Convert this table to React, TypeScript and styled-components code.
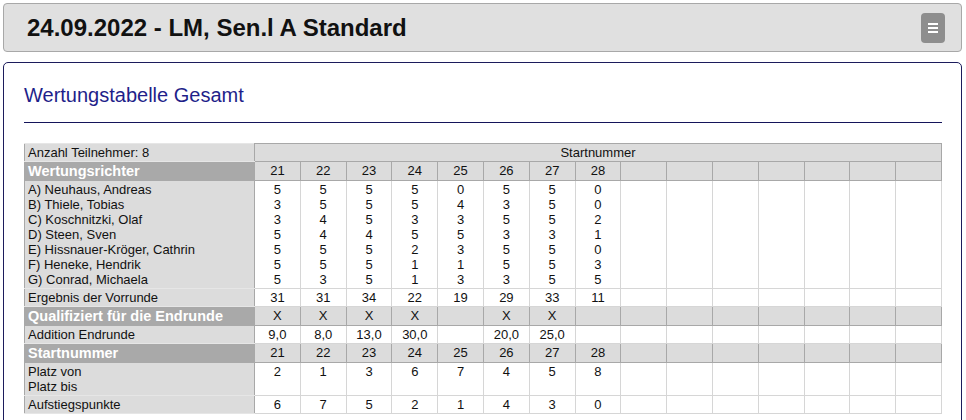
import React from "react";
import styled, { createGlobalStyle } from "styled-components";

const GlobalStyle = createGlobalStyle`
  body {
    margin: 0;
    background: #fff;
    font-family: "Liberation Sans", Arial, sans-serif;
  }
`;

const Page = styled.div`
  padding: 3px 4px 0 3px;
  display: flex;
  flex-direction: column;
  gap: 10px;
`;

const TopBar = styled.div`
  height: 47px;
  background: #e0e0e0;
  border: 1px solid #a8a8a8;
  border-radius: 4px;
  display: flex;
  align-items: center;
  justify-content: space-between;
  padding: 0 16px 0 23px;
`;

const PageTitle = styled.h1`
  margin: 0;
  font-size: 24px;
  font-weight: bold;
  color: #111;
`;

const MenuButton = styled.button`
  width: 24px;
  height: 30px;
  border: none;
  border-radius: 4px;
  background: #8e8e8e;
  display: flex;
  align-items: center;
  justify-content: center;
  padding: 0;
`;

const Panel = styled.div`
  border: 1px solid #1c1c5c;
  border-radius: 5px;
  padding: 21px 19px 20px 20px;
  min-height: 400px;
`;

const PanelTitle = styled.h2`
  margin: 0;
  font-size: 20px;
  font-weight: normal;
  color: #1f1f8a;
  padding-bottom: 15px;
  border-bottom: 1px solid #14145a;
`;

const Table = styled.table`
  margin-top: 20px;
  width: 918px;
  border-collapse: collapse;
  table-layout: fixed;
  font-size: 13px;
  color: #111;
  border: 1px solid #a8a8a8;
`;

const LabelCell = styled.td<{ $head?: boolean }>`
  width: 223px;
  padding: 1px 3px;
  line-height: ${(p) => (p.$head ? "16px" : "15px")};
  text-align: left;
  vertical-align: top;
  background: ${(p) => (p.$head ? "#a9a9a9" : "#dcdcdc")};
  color: ${(p) => (p.$head ? "#fff" : "#111")};
  font-weight: ${(p) => (p.$head ? "bold" : "normal")};
  font-size: ${(p) => (p.$head ? "14.5px" : "13px")};
  border: 1px solid ${(p) => (p.$head ? "#a9a9a9" : "#e6e6e6")};
  border-left-color: #a8a8a8;
  border-right-color: #a8a8a8;
`;

const Cell = styled.td<{ $head?: boolean }>`
  padding: 1px 0;
  line-height: ${(p) => (p.$head ? "16px" : "15px")};
  text-align: center;
  vertical-align: top;
  background: ${(p) => (p.$head ? "#dcdcdc" : "#fff")};
  border: 1px solid ${(p) => (p.$head ? "#a8a8a8" : "#d6d6d6")};
`;

const SpanCell = styled.td`
  padding: 1px 0;
  line-height: 15px;
  text-align: center;
  background: #dcdcdc;
  border: 1px solid #a8a8a8;
`;

const Stack = styled.div`
  display: flex;
  flex-direction: column;
`;

const starts = [21, 22, 23, 24, 25, 26, 27, 28];
const EMPTY = 7;

const judges = [
  { name: "A) Neuhaus, Andreas", v: [5, 5, 5, 5, 0, 5, 5, 0] },
  { name: "B) Thiele, Tobias", v: [3, 5, 5, 5, 4, 3, 5, 0] },
  { name: "C) Koschnitzki, Olaf", v: [3, 4, 5, 3, 3, 5, 5, 2] },
  { name: "D) Steen, Sven", v: [5, 4, 4, 5, 5, 3, 3, 1] },
  { name: "E) Hissnauer-Kröger, Cathrin", v: [5, 5, 5, 2, 3, 5, 5, 0] },
  { name: "F) Heneke, Hendrik", v: [5, 5, 5, 1, 1, 5, 5, 3] },
  { name: "G) Conrad, Michaela", v: [5, 3, 5, 1, 3, 3, 5, 5] },
];

const vorrunde = ["31", "31", "34", "22", "19", "29", "33", "11"];
const quali = ["X", "X", "X", "X", "", "X", "X", ""];
const addition = ["9,0", "8,0", "13,0", "30,0", "", "20,0", "25,0", ""];
const platz = ["2", "1", "3", "6", "7", "4", "5", "8"];
const aufstieg = ["6", "7", "5", "2", "1", "4", "3", "0"];

function Fill({ head }: { head?: boolean }) {
  return (
    <>
      {Array.from({ length: EMPTY }).map((_, i) => (
        <Cell key={i} $head={head} />
      ))}
    </>
  );
}

function ValueRow({ label, values, head }: { label: string; values: string[]; head?: boolean }) {
  return (
    <tr>
      <LabelCell $head={head}>{label}</LabelCell>
      {values.map((v, i) => (
        <Cell key={i} $head={head}>
          {v}
        </Cell>
      ))}
      <Fill head={head} />
    </tr>
  );
}

function MenuIcon() {
  return (
    <svg width="12" height="14" viewBox="0 0 12 14">
      <rect x="1" y="2" width="10" height="2" fill="#fff" />
      <rect x="1" y="6" width="10" height="2" fill="#fff" />
      <rect x="1" y="10" width="10" height="2" fill="#fff" />
    </svg>
  );
}

export default function App() {
  const startStrings = starts.map(String);
  return (
    <Page>
      <GlobalStyle />
      <TopBar>
        <PageTitle>24.09.2022 - LM, Sen.l A Standard</PageTitle>
        <MenuButton aria-label="Menü">
          <MenuIcon />
        </MenuButton>
      </TopBar>
      <Panel>
        <PanelTitle>Wertungstabelle Gesamt</PanelTitle>
        <Table>
          <tbody>
            <tr>
              <LabelCell>Anzahl Teilnehmer: 8</LabelCell>
              <SpanCell colSpan={starts.length + EMPTY}>Startnummer</SpanCell>
            </tr>
            <ValueRow label="Wertungsrichter" values={startStrings} head />
            <tr>
              <LabelCell>
                <Stack>
                  {judges.map((j) => (
                    <span key={j.name}>{j.name}</span>
                  ))}
                </Stack>
              </LabelCell>
              {starts.map((s, c) => (
                <Cell key={s}>
                  <Stack>
                    {judges.map((j) => (
                      <span key={j.name}>{j.v[c]}</span>
                    ))}
                  </Stack>
                </Cell>
              ))}
              <Fill />
            </tr>
            <ValueRow label="Ergebnis der Vorrunde" values={vorrunde} />
            <ValueRow label="Qualifiziert für die Endrunde" values={quali} head />
            <ValueRow label="Addition Endrunde" values={addition} />
            <ValueRow label="Startnummer" values={startStrings} head />
            <tr>
              <LabelCell>
                <Stack>
                  <span>Platz von</span>
                  <span>Platz bis</span>
                </Stack>
              </LabelCell>
              {platz.map((v, i) => (
                <Cell key={i}>{v}</Cell>
              ))}
              <Fill />
            </tr>
            <ValueRow label="Aufstiegspunkte" values={aufstieg} />
          </tbody>
        </Table>
      </Panel>
    </Page>
  );
}
